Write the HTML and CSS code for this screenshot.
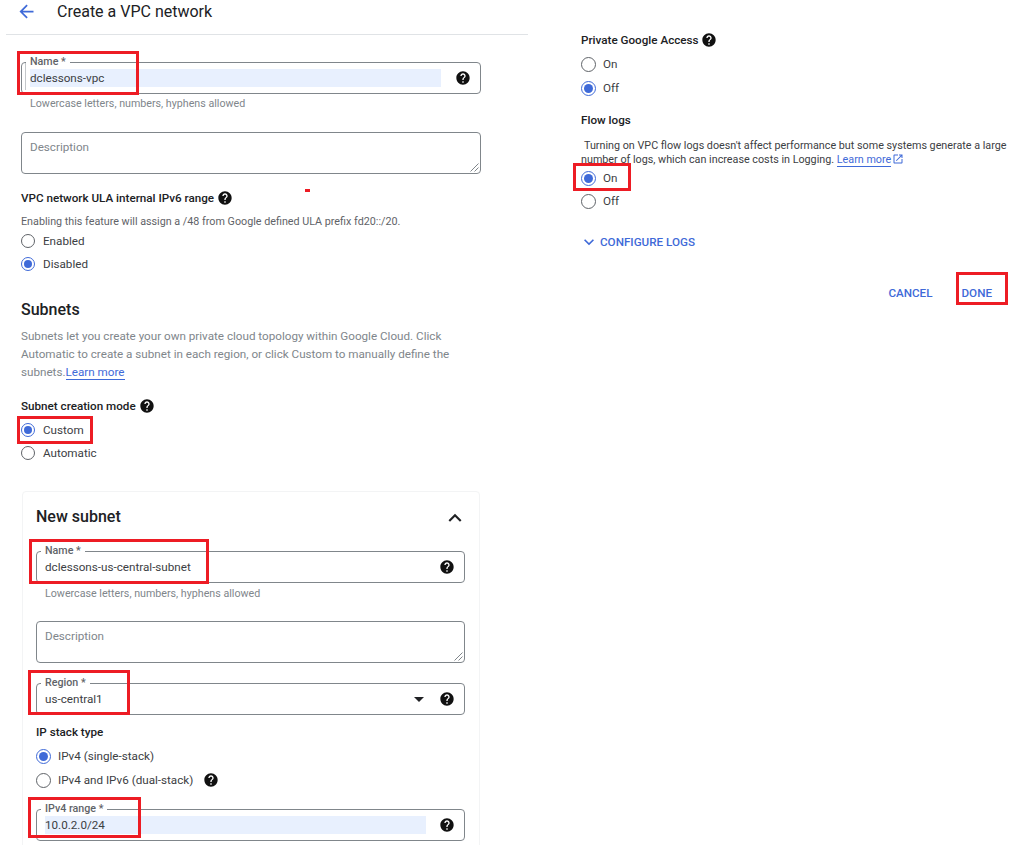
FILE: index.html
```html
<!DOCTYPE html>
<html lang="en">
<head>
<meta charset="utf-8">
<title>Create a VPC network</title>
<link rel="stylesheet" href="styles.css">
</head>
<body>
<svg class="defs" width="0" height="0" aria-hidden="true">
  <symbol id="help" viewBox="0 0 24 24"><path d="M12 2C6.48 2 2 6.48 2 12s4.48 10 10 10 10-4.48 10-10S17.52 2 12 2zm1 17h-2v-2h2v2zm2.07-7.75l-.9.92C13.45 12.9 13 13.5 13 15h-2v-.5c0-1.1.45-2.1 1.17-2.83l1.24-1.26c.37-.36.59-.86.59-1.41 0-1.1-.9-2-2-2s-2 .9-2 2H8c0-2.21 1.79-4 4-4s4 1.79 4 4c0 .88-.36 1.68-.93 2.25z"/></symbol>
  <symbol id="grip" viewBox="0 0 9 9"><path d="M0.5 8.5L8.5 0.5M4.5 8.5L8.5 4.5" fill="none" stroke="#80868b" stroke-width="1"/></symbol>
</svg>
<div class="page">
  <main class="left">
    <header class="topbar">
      <svg class="back" viewBox="0 0 24 24"><path d="M20 11H7.83l5.59-5.59L12 4l-8 8 8 8 1.41-1.41L7.83 13H20v-2z"/></svg>
      <h1>Create a VPC network</h1>
    </header>
    <div class="form">
      <div class="field field-first">
        <span class="float-label">Name *</span>
        <span class="value selected">dclessons-vpc</span>
        <svg class="help"><use href="#help"/></svg>
      </div>
      <p class="hint">Lowercase letters, numbers, hyphens allowed</p>
      <div class="area area-main">
        <span class="placeholder">Description</span>
        <svg class="grip"><use href="#grip"/></svg>
      </div>
      <div class="group-label ula">VPC network ULA internal IPv6 range <svg class="help"><use href="#help"/></svg></div>
      <p class="note">Enabling this feature will assign a /48 from Google defined ULA prefix fd20::/20.</p>
      <div class="radio-row"><span class="radio"></span>Enabled</div>
      <div class="radio-row"><span class="radio on"></span>Disabled</div>
      <h2>Subnets</h2>
      <p class="lead">Subnets let you create your own private cloud topology within Google Cloud. Click Automatic to create a subnet in each region, or click Custom to manually define the subnets.<a class="link">Learn more</a></p>
      <div class="group-label mode">Subnet creation mode <svg class="help"><use href="#help"/></svg></div>
      <div class="radio-list">
        <div class="radio-row"><span class="radio on"></span>Custom</div>
        <div class="radio-row"><span class="radio"></span>Automatic</div>
      </div>
      <section class="card">
        <div class="card-head">
          <h2 class="card-title">New subnet</h2>
          <svg class="chevron" viewBox="0 0 24 24"><path d="M12 8l-6 6 1.41 1.41L12 10.83l4.59 4.58L18 14z"/></svg>
        </div>
        <div class="field">
          <span class="float-label">Name *</span>
          <span class="value">dclessons-us-central-subnet</span>
          <svg class="help"><use href="#help"/></svg>
        </div>
        <p class="hint hint-sub">Lowercase letters, numbers, hyphens allowed</p>
        <div class="area area-sub">
          <span class="placeholder">Description</span>
          <svg class="grip"><use href="#grip"/></svg>
        </div>
        <div class="field field-region">
          <span class="float-label">Region *</span>
          <span class="value">us-central1</span>
          <span class="caret"></span>
          <svg class="help"><use href="#help"/></svg>
        </div>
        <div class="group-label stack">IP stack type</div>
        <div class="radio-list-sub">
          <div class="radio-row row-24"><span class="radio big on"></span>IPv4 (single-stack)</div>
          <div class="radio-row row-24"><span class="radio big"></span>IPv4 and IPv6 (dual-stack)<svg class="help help-gap"><use href="#help"/></svg></div>
        </div>
        <div class="field field-range">
          <span class="float-label">IPv4 range *</span>
          <span class="value selected">10.0.2.0/24</span>
          <svg class="help"><use href="#help"/></svg>
        </div>
      </section>
    </div>
  </main>
  <aside class="right">
    <div class="group-label">Private Google Access <svg class="help"><use href="#help"/></svg></div>
    <div class="radio-list-right">
      <div class="radio-row row-24"><span class="radio big"></span>On</div>
      <div class="radio-row row-24"><span class="radio big on"></span>Off</div>
    </div>
    <div class="group-label flow">Flow logs</div>
    <p class="flow-text">Turning on VPC flow logs doesn't affect performance but some systems generate a large number of logs, which can increase costs in Logging. <a class="link">Learn more</a><svg class="ext" viewBox="0 0 24 24"><path d="M19 19H5V5h7V3H5c-1.11 0-2 .9-2 2v14c0 1.1.89 2 2 2h14c1.1 0 2-.9 2-2v-7h-2v7zM14 3v2h3.59l-9.83 9.83 1.41 1.41L19 6.41V10h2V3h-7z"/></svg></p>
    <div class="radio-row"><span class="radio big on"></span>On</div>
    <div class="radio-row"><span class="radio big"></span>Off</div>
    <div class="configure">
      <svg class="expand" viewBox="0 0 24 24"><path d="M16.59 8.59L12 13.17 7.41 8.59 6 10l6 6 6-6z"/></svg>
      <span>CONFIGURE LOGS</span>
    </div>
    <div class="actions">
      <span>CANCEL</span>
      <span>DONE</span>
    </div>
  </aside>
  <div class="mark mark-name"></div>
  <div class="mark mark-custom"></div>
  <div class="mark mark-subnet"></div>
  <div class="mark mark-region"></div>
  <div class="mark mark-range"></div>
  <div class="mark mark-on"></div>
  <div class="mark mark-done"></div>
  <div class="speck"></div>
</div>
</body>
</html>
```

FILE: styles.css
```css
* { box-sizing: border-box; }
html, body { margin: 0; padding: 0; background: #fff; }
body { font-family: Roboto, "Liberation Sans", sans-serif; font-size: 11.67px; color: #3c4043; }
.defs { position: absolute; }
p, h1, h2 { margin: 0; }

.page { position: relative; display: flex; width: 1024px; height: 845px; overflow: hidden; }
.left { flex: none; width: 522px; margin-left: 6px; }
.right { flex: none; width: 436px; margin-left: 53px; padding-top: 31px; }

.topbar { display: flex; align-items: center; height: 35px; border-bottom: 1px solid #e0e3e6; padding: 0 0 11px 1px; }
.back { width: 21px; height: 21px; fill: #3f6ad8; flex: none; margin-left: 9px; }
h1 { font-size: 16px; font-weight: 400; line-height: 24px; color: #202124; margin-left: 20px; }

.form { padding-left: 15px; width: 475px; }

.help { width: 16px; height: 16px; fill: #111; flex: none; vertical-align: -3.5px; }
.help-gap { margin-left: 10px; }

.field { position: relative; display: flex; align-items: center; height: 32px; margin-top: 27px; padding: 0 9px 0 8px; border: 1px solid #80868b; border-radius: 4px; }
.field-first::before { content: ""; position: absolute; left: 3px; top: 0; bottom: 3px; width: 1px; background: #c4c7ca; }
.float-label { position: absolute; left: 4px; top: -8px; padding: 0 4px; background: #fff; font-size: 10.7px; line-height: 14px; font-weight: 500; color: #5f6368; }
.value { flex: 1; font-size: 11.67px; line-height: 18px; color: #3c4043; }
.selected { background: #e8f0fe; margin-right: 14px; }
.field-range .selected { margin-right: 13px; }

.hint { margin: 2px 0 0 9px; font-size: 10.7px; line-height: 16px; color: #80868b; }
.hint-sub { margin-top: 3px; }

.area { position: relative; border: 1px solid #80868b; border-radius: 4px; height: 42px; padding: 5px 8px; }
.area-main { margin-top: 20px; }
.area-sub { margin-top: 19px; }
.placeholder { font-size: 11.67px; line-height: 18px; color: #80868b; }
.grip { position: absolute; right: 1px; bottom: 1px; width: 9px; height: 9px; }

.group-label { font-size: 11.67px; line-height: 18px; font-weight: 500; color: #202124; }
.ula { margin-top: 15px; }
.note { margin-top: 7px; margin-bottom: -1px; font-size: 10.75px; line-height: 16px; color: #5f6368; }

.radio-row { display: flex; align-items: center; height: 23px; font-size: 11.67px; color: #3c4043; }
.row-24 { height: 24px; }
.radio { position: relative; flex: none; width: 14px; height: 14px; margin-right: 8px; border: 1px solid #5f6368; border-radius: 50%; }
.radio.big { width: 15px; height: 15px; margin-right: 7px; }
.radio.on { border-color: #3f6ad8; }
.radio.on::after { content: ""; position: absolute; inset: 2px; border-radius: 50%; background: #3f6ad8; }

h2 { margin-top: 23px; font-size: 16px; line-height: 24px; font-weight: 500; color: #202124; }
.lead { margin-top: 5px; font-size: 11.67px; line-height: 18px; color: #80868b; }
.link { color: #3f6ad8; border-bottom: 1px solid #3f6ad8; }
.mode { margin-top: 16px; }
.radio-list { margin-top: 3px; }

.card { margin-top: 27px; margin-left: 1px; width: 458px; height: 400px; padding: 13px 14px 0 13px; border: 1px solid #f3f4f5; border-radius: 4px; }
.card-head { display: flex; align-items: center; justify-content: space-between; height: 24px; }
.card-title { margin: 0; }
.chevron { width: 26px; height: 26px; fill: #202124; margin-top: 2px; margin-right: -3px; }
.card .field { width: 429px; margin-top: 22px; }
.card .field-region { margin-top: 20px; }
.card .field-range { margin-top: 17px; }
.caret { flex: none; width: 0; height: 0; margin-right: 15px; border-left: 5px solid transparent; border-right: 5px solid transparent; border-top: 5px solid #202124; }
.card .area { width: 429px; }
.stack { margin-top: 8px; }
.radio-list-sub { margin-top: 3px; }

.radio-list-right { margin-top: 3px; }
.flow { margin-top: 11px; }
.flow-text { margin-top: 10px; margin-bottom: -0.5px; font-size: 10.78px; line-height: 14px; color: #3c4043; text-indent: 3px; width: 428px; }
.ext { width: 12px; height: 12px; fill: #3f6ad8; margin-left: 1px; vertical-align: -2px; }

.configure { display: flex; align-items: center; margin-top: 20px; height: 18px; font-size: 11.67px; font-weight: 500; color: #3f6ad8; }
.expand { width: 20px; height: 20px; fill: #3f6ad8; margin-left: -2px; margin-right: 1px; }
.actions { display: flex; justify-content: flex-end; gap: 29px; margin-top: 33px; width: 411px; line-height: 18px; font-size: 11.67px; font-weight: 500; color: #3f6ad8; }

.mark { position: absolute; border: 3px solid #ed1c24; }
.mark-name { left: 17px; top: 51px; width: 122px; height: 44px; }
.mark-custom { left: 17px; top: 416px; width: 76px; height: 28px; }
.mark-subnet { left: 29px; top: 539px; width: 180px; height: 45px; }
.mark-region { left: 28px; top: 670px; width: 102px; height: 45px; }
.mark-range { left: 28px; top: 797px; width: 113px; height: 41px; }
.mark-on { left: 573px; top: 163px; width: 58px; height: 28px; }
.mark-done { left: 956px; top: 272px; width: 52px; height: 33px; }
.speck { position: absolute; left: 305px; top: 189px; width: 5px; height: 3px; background: #ed1c24; }
```
